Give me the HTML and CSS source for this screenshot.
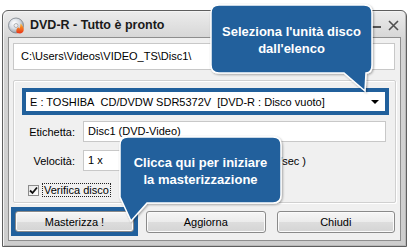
FILE: index.html
```html
<!DOCTYPE html>
<html lang="it">
<head>
<meta charset="utf-8">
<title>DVD-R - Tutto è pronto</title>
<link rel="stylesheet" href="styles.css">
</head>
<body>
<div class="window">
  <div class="titlebar">
    <svg class="app-icon" width="17" height="17" viewBox="0 0 17 17">
      <defs>
        <radialGradient id="disc" cx="0.4" cy="0.35" r="0.7">
          <stop offset="0" stop-color="#ffffff"/>
          <stop offset="0.5" stop-color="#d8dde4"/>
          <stop offset="1" stop-color="#8d949c"/>
        </radialGradient>
        <linearGradient id="flame" x1="0" y1="1" x2="0" y2="0">
          <stop offset="0" stop-color="#e8321a"/>
          <stop offset="0.6" stop-color="#f57d1f"/>
          <stop offset="1" stop-color="#ffc84a"/>
        </linearGradient>
      </defs>
      <circle cx="8" cy="8.5" r="7.5" fill="url(#disc)" stroke="#7a8088" stroke-width="0.8"/>
      <circle cx="8" cy="8.5" r="2" fill="#f0f0f0" stroke="#8a8f96" stroke-width="0.6"/>
      <path d="M9 16 C7.5 14 8.5 11.5 10.5 10 C10.5 11.5 11.5 12 12 10.5 C12.5 9 12 7.5 12.8 6.5 C14.5 8.5 16.5 11.5 15.5 14 C15 15.5 13.5 16.5 12 16.5 Z" fill="url(#flame)"/>
    </svg>
    <span class="title">DVD-R - Tutto è pronto</span>
    <span class="caption-btns">
      <span class="min"></span>
      <svg class="close" width="11" height="11" viewBox="0 0 11 11"><path d="M1 1 L10 10 M10 1 L1 10" stroke="#505050" stroke-width="1.6"/></svg>
    </span>
  </div>
  <div class="client">
    <div class="path-field">C:\Users\Videos\VIDEO_TS\Disc1\</div>
    <div class="group">
      <div class="hl combo-hl">
        <div class="combo">
          <span class="drive">E : TOSHIBA&nbsp; CD/DVDW SDR5372V</span>
          <span class="media">[DVD-R : Disco vuoto]</span>
          <span class="arrow"></span>
        </div>
      </div>
      <div class="row">
        <span class="label">Etichetta:</span>
        <div class="field label-field">Disc1 (DVD-Video)</div>
      </div>
      <div class="row">
        <span class="label">Velocità:</span>
        <div class="field speed-field">1 x</div>
        <span class="speed-info">/sec )</span>
      </div>
      <div class="check-row">
        <span class="checkbox">
          <svg width="9" height="9" viewBox="0 0 9 9"><path d="M1 4.5 L3.5 7 L8 1.5" fill="none" stroke="#111" stroke-width="1.8"/></svg>
        </span>
        <span class="check-label">Verifica disco</span>
      </div>
    </div>
    <div class="buttons">
      <div class="hl btn-hl"><button class="btn">Masterizza !</button></div>
      <button class="btn btn-refresh">Aggiorna</button>
      <button class="btn btn-close">Chiudi</button>
    </div>
  </div>
</div>

<svg class="bubble bubble-top" width="180" height="100" viewBox="205 0 180 100">
  <defs>
    <filter id="sh" x="-10%" y="-10%" width="120%" height="130%">
      <feDropShadow dx="1" dy="1" stdDeviation="1" flood-color="#000" flood-opacity="0.35"/>
    </filter>
  </defs>
  <path d="M219 5 H364 Q372 5 372 13 V65 Q372 73 366 73 L365 91 L344 73 H219 Q211 73 211 65 V13 Q211 5 219 5 Z" fill="#21609c" stroke="#ffffff" stroke-width="1.5" filter="url(#sh)"/>
</svg>
<div class="bubble-text bt-top">Seleziona l'unità disco<br>dall'elenco</div>

<svg class="bubble bubble-bottom" width="175" height="100" viewBox="115 130 175 100">
  <defs>
    <filter id="sh2" x="-10%" y="-10%" width="120%" height="130%">
      <feDropShadow dx="1" dy="1" stdDeviation="1" flood-color="#000" flood-opacity="0.35"/>
    </filter>
  </defs>
  <path d="M128 137 H273 Q281 137 281 145 V195 Q281 203 273 203 H147 L131 221 L120 197 V145 Q120 137 128 137 Z" fill="#21609c" stroke="#ffffff" stroke-width="1.5" filter="url(#sh2)"/>
</svg>
<div class="bubble-text bt-bottom">Clicca qui per iniziare<br>la masterizzazione</div>
</body>
</html>
```

FILE: styles.css
```css
html, body {
  margin: 0;
  padding: 0;
  background: #ffffff;
  width: 409px;
  height: 250px;
  overflow: hidden;
  font-family: "Liberation Sans", Arial, sans-serif;
  font-size: 11px;
  color: #000;
}

.window {
  position: relative;
  margin: 10px 0 0 2px;
  width: 405px;
  height: 237px;
  box-sizing: border-box;
  border: 1px solid #5e5e5e;
  border-radius: 6px 6px 0 0;
  background: linear-gradient(#ececec, #d4d4d4 30px, #cdcdcd);
  padding: 0 5px 5px 5px;
  display: flex;
  flex-direction: column;
  box-shadow: inset 1px 1px 0 #f4f4f4, inset -1px -1px 0 #b8b8b8;
}

.titlebar {
  height: 26px;
  display: flex;
  align-items: center;
  flex: none;
}

.app-icon {
  margin-top: 2px;
}

.title {
  margin-left: 5px;
  font-weight: bold;
  font-size: 12.5px;
  color: #1a1a1a;
  margin-top: 2px;
}

.caption-btns {
  margin-left: auto;
  display: flex;
  align-items: center;
  gap: 7px;
  margin-right: 2px;
  margin-top: 2px;
}

.min {
  width: 10px;
  height: 2px;
  background: #555;
  margin-top: 4px;
}

.client {
  flex: 1;
  background: #f0f0f0;
  border: 1px solid #8e8e8e;
  padding: 5px 5px 0 4px;
  display: flex;
  flex-direction: column;
}

.path-field {
  height: 27px;
  box-sizing: border-box;
  border: 1px solid #c8c8c8;
  background: #fff;
  padding-left: 7px;
  line-height: 25px;
}

.group {
  margin-top: 10px;
  height: 123px;
  box-sizing: border-box;
  border: 1px solid #d0d0d0;
  box-shadow: inset 1px 1px 0 #fff, 1px 1px 0 #fff;
  border-radius: 2px;
  padding: 7px 8px 0 8px;
  width: 383px;
}

.hl {
  background: #21609c;
  padding: 4px;
  box-sizing: border-box;
}

.combo-hl {
  height: 27px;
  width: 367px;
}

.combo {
  height: 19px;
  background: #fff;
  display: flex;
  align-items: center;
  padding-left: 4px;
  white-space: pre;
}

.media {
  margin-left: 6px;
}

.arrow {
  margin-left: auto;
  margin-right: 6px;
  width: 0;
  height: 0;
  border-left: 4px solid transparent;
  border-right: 4px solid transparent;
  border-top: 4px solid #000;
}

.row {
  display: flex;
  align-items: center;
  margin-top: 6px;
}

.label {
  width: 53px;
  text-align: right;
  padding-right: 8px;
  flex: none;
}

.field {
  box-sizing: border-box;
  height: 21px;
  border: 1px solid #c8c8c8;
  background: #fff;
  line-height: 19px;
  padding-left: 4px;
}

.label-field {
  width: 303px;
}

.row + .row {
  margin-top: 8px;
}

.speed-field {
  width: 90px;
}

.speed-info {
  margin-left: auto;
  margin-right: 81px;
}

.check-row {
  display: flex;
  align-items: center;
  margin-top: 13px;
  margin-left: 6px;
}

.checkbox {
  width: 11px;
  height: 11px;
  box-sizing: border-box;
  border: 1px solid #8b8b8b;
  background: linear-gradient(135deg, #e6e6e6, #ffffff);
  display: flex;
  align-items: center;
  justify-content: center;
}

.check-label {
  margin-left: 4px;
  padding: 0 1px;
  outline: 1px dotted #222;
  line-height: 12px;
}

.buttons {
  display: flex;
  align-items: center;
  margin-top: 4px;
  margin-left: -2px;
}

.btn {
  font-family: "Liberation Sans", Arial, sans-serif;
  font-size: 11px;
  color: #000;
  height: 22px;
  border: 1px solid #8a8a8a;
  border-radius: 3px;
  background: linear-gradient(#f6f6f6, #ebebeb 50%, #dddddd 51%, #d4d4d4);
  box-shadow: inset 0 0 0 1px #fbfbfb;
  padding: 0;
}

.btn-hl {
  width: 127px;
  height: 29px;
  padding: 4px;
}

.btn-hl .btn {
  width: 119px;
  height: 21px;
}

.btn-refresh {
  width: 121px;
  margin-left: 8px;
}

.btn-close {
  width: 120px;
  margin-left: 11px;
}

.bubble {
  position: absolute;
  overflow: visible;
}

.bubble-top {
  left: 205px;
  top: 0;
}

.bubble-bottom {
  left: 115px;
  top: 130px;
}

.bubble-text {
  position: absolute;
  color: #fff;
  font-weight: bold;
  font-size: 13px;
  line-height: 17px;
  text-align: center;
}

.bt-top {
  left: 211px;
  top: 23px;
  width: 161px;
}

.bt-bottom {
  left: 120px;
  top: 154px;
  width: 161px;
}
```
